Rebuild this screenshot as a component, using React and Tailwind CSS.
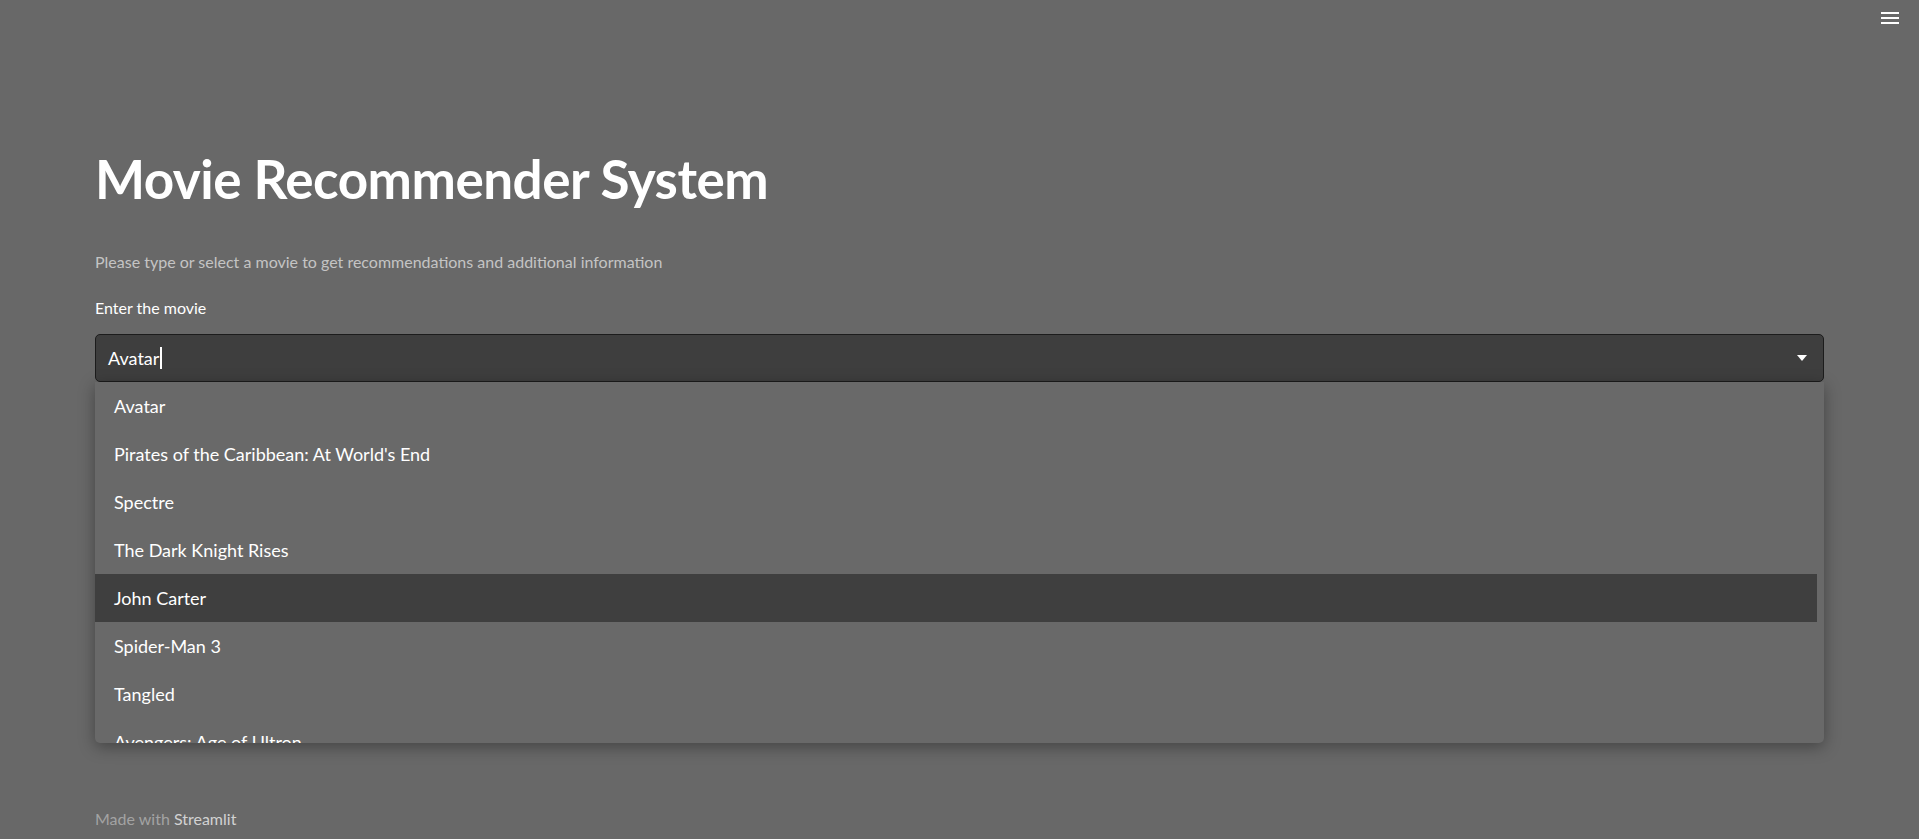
import React from 'react';

const movies = [
  'Avatar',
  "Pirates of the Caribbean: At World's End",
  'Spectre',
  'The Dark Knight Rises',
  'John Carter',
  'Spider-Man 3',
  'Tangled',
  'Avengers: Age of Ultron',
];

const App = () => {
  const active = 'John Carter';

  return (
    <div className="relative min-h-[839px] bg-[#686868] font-['Lato','Noto_Sans',sans-serif]">
      {/* top right menu */}
      <button className="absolute right-[20px] top-[12px] flex flex-col gap-[3px]">
        <span className="block h-[2px] w-[18px] bg-white" />
        <span className="block h-[2px] w-[18px] bg-white" />
        <span className="block h-[2px] w-[18px] bg-white" />
      </button>

      <div className="px-[95px] pt-[146px]">
        <h1 className="text-[53px] font-bold leading-[66px] text-white tracking-[-0.5px]">
          Movie Recommender System
        </h1>

        <p className="mt-[38px] text-[16px] leading-[24px] text-[#c4c4c4]">
          Please type or select a movie to get recommendations and additional information
        </p>

        <label className="mt-[24px] block text-[16px] leading-[20px] text-white">Enter the movie</label>

        <div className="relative mt-[16px]">
          <div className="flex h-[48px] items-center justify-between rounded-[5px] border border-[#1c1c1c] bg-[#3e3e3e] pl-[12px] pr-[16px]">
            <div className="flex items-center text-[18px] text-white">
              Avatar
              <span className="ml-[1px] inline-block h-[22px] w-[2px] bg-white" />
            </div>
            <svg width="10" height="6" viewBox="0 0 10 6">
              <path d="M0 0 L10 0 L5 6 Z" fill="#ffffff" />
            </svg>
          </div>

          <div className="absolute left-0 right-0 top-[48px] h-[361px] overflow-hidden rounded-b-[5px] bg-[#696969] pr-[7px] shadow-[0_4px_16px_rgba(0,0,0,0.35)]">
            {movies.map((m) => (
              <div
                key={m}
                className={`flex h-[48px] items-center pl-[19px] text-[18px] text-white ${
                  m === active ? 'bg-[#3f3f3f]' : ''
                }`}
              >
                {m}
              </div>
            ))}
          </div>
        </div>

        <div className="h-[413px]" />
      </div>

      <footer className="px-[95px] pt-[12px] text-[16px] text-[#a3a3a3]">
        Made with <span className="text-[#d2d2d2]">Streamlit</span>
      </footer>
    </div>
  );
};

export default App;
